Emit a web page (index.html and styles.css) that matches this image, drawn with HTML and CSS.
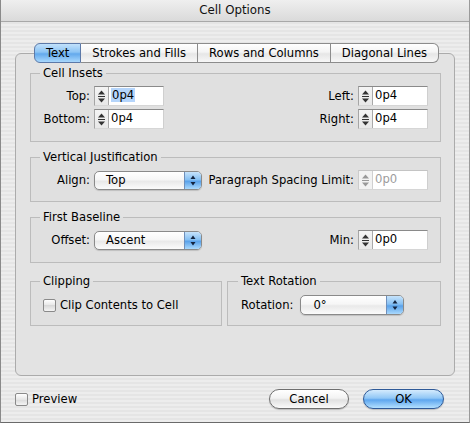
FILE: index.html
```html
<!DOCTYPE html>
<html>
<head>
<meta charset="utf-8">
<link rel="stylesheet" href="styles.css">
</head>
<body>
<div class="window">
  <div class="titlebar">Cell Options</div>
  <div class="content">
    <div class="panel">
      <div class="tabs">
        <div class="tab first selected">Text</div>
        <div class="tab">Strokes and Fills</div>
        <div class="tab">Rows and Columns</div>
        <div class="tab last">Diagonal Lines</div>
      </div>

      <fieldset class="group insets">
        <legend>Cell Insets</legend>
        <div class="row">
          <span class="label">Top:</span>
          <div class="spin">
            <span class="arrows"><svg width="13" height="18" viewBox="0 0 13 18"><path d="M3 7.5h7L6.5 3.5z" fill="#333"/><path d="M3 9.5h7" stroke="#333" stroke-width="1"/><path d="M3 11.5h7l-3.5 4z" fill="#333"/></svg></span>
            <span class="val"><span class="sel">0p4</span></span>
          </div>
          <span class="label right">Left:</span>
          <div class="spin">
            <span class="arrows"><svg width="13" height="18" viewBox="0 0 13 18"><path d="M3 7.5h7L6.5 3.5z" fill="#333"/><path d="M3 9.5h7" stroke="#333" stroke-width="1"/><path d="M3 11.5h7l-3.5 4z" fill="#333"/></svg></span>
            <span class="val">0p4</span>
          </div>
        </div>
        <div class="row">
          <span class="label">Bottom:</span>
          <div class="spin">
            <span class="arrows"><svg width="13" height="18" viewBox="0 0 13 18"><path d="M3 7.5h7L6.5 3.5z" fill="#333"/><path d="M3 9.5h7" stroke="#333" stroke-width="1"/><path d="M3 11.5h7l-3.5 4z" fill="#333"/></svg></span>
            <span class="val">0p4</span>
          </div>
          <span class="label right">Right:</span>
          <div class="spin">
            <span class="arrows"><svg width="13" height="18" viewBox="0 0 13 18"><path d="M3 7.5h7L6.5 3.5z" fill="#333"/><path d="M3 9.5h7" stroke="#333" stroke-width="1"/><path d="M3 11.5h7l-3.5 4z" fill="#333"/></svg></span>
            <span class="val">0p4</span>
          </div>
        </div>
      </fieldset>

      <fieldset class="group vj">
        <legend>Vertical Justification</legend>
        <div class="row tall">
          <span class="label">Align:</span>
          <div class="popup">
            <span class="ptext">Top</span>
            <span class="parrow"><svg width="16" height="17" viewBox="0 0 16 17"><path d="M5.5 7h5L8 3.5z" fill="#14243f"/><path d="M5.5 10h5L8 13.5z" fill="#14243f"/></svg></span>
          </div>
          <span class="label right">Paragraph Spacing Limit:</span>
          <div class="spin disabled">
            <span class="arrows"><svg width="13" height="18" viewBox="0 0 13 18"><path d="M3 7.5h7L6.5 3.5z" fill="#999"/><path d="M3 9.5h7" stroke="#999" stroke-width="1"/><path d="M3 11.5h7l-3.5 4z" fill="#999"/></svg></span>
            <span class="val">0p0</span>
          </div>
        </div>
      </fieldset>

      <fieldset class="group fb">
        <legend>First Baseline</legend>
        <div class="row tall">
          <span class="label">Offset:</span>
          <div class="popup">
            <span class="ptext">Ascent</span>
            <span class="parrow"><svg width="16" height="17" viewBox="0 0 16 17"><path d="M5.5 7h5L8 3.5z" fill="#14243f"/><path d="M5.5 10h5L8 13.5z" fill="#14243f"/></svg></span>
          </div>
          <span class="label right">Min:</span>
          <div class="spin">
            <span class="arrows"><svg width="13" height="18" viewBox="0 0 13 18"><path d="M3 7.5h7L6.5 3.5z" fill="#333"/><path d="M3 9.5h7" stroke="#333" stroke-width="1"/><path d="M3 11.5h7l-3.5 4z" fill="#333"/></svg></span>
            <span class="val">0p0</span>
          </div>
        </div>
      </fieldset>

      <div class="pair">
        <fieldset class="group clip">
          <legend>Clipping</legend>
          <label class="check"><span class="box"></span>Clip Contents to Cell</label>
        </fieldset>
        <fieldset class="group rot">
          <legend>Text Rotation</legend>
          <div class="rotrow">
            <span class="rlabel">Rotation:</span>
            <div class="popup small">
              <span class="ptext">0°</span>
              <span class="parrow"><svg width="16" height="18" viewBox="0 0 16 18"><path d="M5.5 7.5h5L8 4z" fill="#14243f"/><path d="M5.5 10.5h5L8 14z" fill="#14243f"/></svg></span>
            </div>
          </div>
        </fieldset>
      </div>
    </div>

    <div class="footer">
      <label class="check preview"><span class="box"></span>Preview</label>
      <div class="buttons">
        <div class="btn">Cancel</div>
        <div class="btn default">OK</div>
      </div>
    </div>
  </div>
</div>
</body>
</html>
```
FILE: styles.css
```css
* { box-sizing: border-box; }
html, body { margin: 0; padding: 0; }
body {
  width: 470px;
  height: 423px;
  overflow: hidden;
  font-family: "DejaVu Sans", "Liberation Sans", sans-serif;
  font-size: 11.6px;
  color: #000;
  background: #d8d8d8;
}
.window {
  width: 470px;
  height: 423px;
  border-left: 1px solid #8a8a8a;
  border-right: 1px solid #9a9a9a;
  border-bottom: 1px solid #6a6a6a;
  display: flex;
  flex-direction: column;
  background: repeating-linear-gradient(to bottom, #ededed 0 2px, #e5e5e5 2px 4px);
}
.titlebar {
  height: 22px;
  line-height: 21px;
  text-align: center;
  font-size: 11.8px;
  border-bottom: 1px solid #a8a8a8;
  background: linear-gradient(to bottom, #efefef, #dadada);
  color: #111;
}
.content {
  flex: 1;
  display: flex;
  flex-direction: column;
  padding: 31px 0 0 14px;
}
.panel {
  width: 440px;
  border: 1px solid #ababab;
  border-radius: 6px;
  background: #e3e3e3;
  padding: 0 13px 49px 14px;
  display: flex;
  flex-direction: column;
}
.tabs {
  display: flex;
  justify-content: center;
  margin: -11px 0 0 2px;
  height: 20px;
}
.tab {
  height: 20px;
  line-height: 18px;
  padding: 0 11px;
  border: 1px solid #8c8c8c;
  border-left: none;
  background: linear-gradient(to bottom, #ffffff 0%, #f4f4f4 45%, #e6e6e6 55%, #f7f7f7 100%);
  white-space: nowrap;
}
.tab.first { border-left: 1px solid #5c79a8; border-radius: 6px 0 0 6px; }
.tab.last { border-radius: 0 6px 6px 0; }
.tab.selected {
  border-color: #5c79a8;
  background: linear-gradient(to bottom, #c2e1fb 0%, #8cc4f4 45%, #63a9ec 55%, #a8d8fd 100%);
}
.group {
  margin: 0;
  border: 1px solid #bcbcbc;
  border-radius: 0;
  padding: 6px 12px 12px 12px;
  min-inline-size: 0;
  background: #e0e0e0;
}
.group legend {
  padding: 0 3px;
  margin-left: -3px;
  line-height: 14px;
  height: 14px;
}
.insets { margin-top: 3px; }
.vj { margin-top: 8px; padding-top: 5px; padding-bottom: 10px; }
.fb { margin-top: 8px; padding-top: 5px; padding-bottom: 11px; }
.row {
  display: flex;
  align-items: center;
  height: 20px;
}
.row + .row { margin-top: 3px; }
.row.tall { height: 22px; }
.label {
  width: 47px;
  text-align: right;
  margin-right: 4px;
  white-space: nowrap;
}
.label.right {
  width: auto;
  margin-left: auto;
}
.spin {
  width: 70px;
  height: 20px;
  display: flex;
  background: #fff;
  border-top: 1px solid #8a8a8a;
  border-left: 1px solid #a5a5a5;
  border-right: 1px solid #cfcfcf;
  border-bottom: 1px solid #d6d6d6;
}
.spin .arrows {
  width: 14px;
  flex: none;
  background: linear-gradient(to bottom, #f4f4f4, #e8e8e8);
  border-right: 1px solid #a9a9a9;
  display: flex;
  align-items: center;
}
.spin .val {
  padding-left: 2px;
  line-height: 17px;
  white-space: nowrap;
}
.spin .sel { background: #b5d5fb; padding: 0 1px; }
.spin.disabled { border-top-color: #c4c4c4; border-left-color: #cccccc; }
.spin.disabled .arrows { border-right-color: #d0d0d0; background: #f2f2f2; }
.spin.disabled .val { color: #9c9c9c; }
.popup {
  width: 108px;
  height: 19px;
  display: flex;
  border: 1px solid #8a8a8a;
  border-radius: 5px;
  overflow: hidden;
  background: linear-gradient(to bottom, #ffffff 0%, #f6f6f6 45%, #e9e9e9 55%, #fbfbfb 100%);
  box-shadow: 0 1px 1px rgba(0,0,0,0.15);
}
.popup .ptext {
  flex: 1;
  padding-left: 11px;
  line-height: 17px;
}
.popup .parrow {
  width: 17px;
  flex: none;
  border-left: 1px solid #6e8fbb;
  background: linear-gradient(to bottom, #c6e3fb 0%, #86c0f3 45%, #5aa2ea 55%, #aad9fd 100%);
  display: flex;
  align-items: center;
  justify-content: center;
}
.pair {
  display: flex;
  gap: 5px;
  margin-top: 11px;
}
.pair .group { padding-top: 7px; padding-bottom: 10px; }
.clip { width: 192px; flex: none; }
.rot { flex: 1; padding-left: 13px; }
.check {
  display: flex;
  align-items: center;
  height: 20px;
  white-space: nowrap;
}
.check .box {
  width: 13px;
  height: 13px;
  border: 1px solid #8a8a8a;
  border-radius: 2px;
  background: linear-gradient(to bottom, #ffffff, #e6e6e6 50%, #d9d9d9 50%, #f4f4f4);
  margin-right: 4px;
  flex: none;
}
.rotrow {
  display: flex;
  align-items: center;
  height: 20px;
}
.rlabel { margin-right: 7px; }
.popup.small { width: 104px; height: 20px; }
.popup.small .ptext { padding-left: 12px; line-height: 18px; }
.footer {
  flex: 1;
  display: flex;
  align-items: center;
  justify-content: space-between;
  padding: 0 25px 0 0;
}
.preview .box { margin-right: 4px; }
.buttons {
  display: flex;
  gap: 14px;
}
.btn {
  width: 80px;
  height: 20px;
  line-height: 18px;
  text-align: center;
  border: 1px solid #6f6f6f;
  border-radius: 10px;
  background: linear-gradient(to bottom, #ffffff 0%, #f3f3f3 45%, #e1e1e1 55%, #fafafa 100%);
  box-shadow: 0 1px 1px rgba(0,0,0,0.2);
}
.btn.default {
  width: 81px;
  border-color: #2f5a98;
  background: linear-gradient(to bottom, #d4ebfd 0%, #91c7f6 45%, #5ea6ee 55%, #b3e0ff 100%);
}
```
